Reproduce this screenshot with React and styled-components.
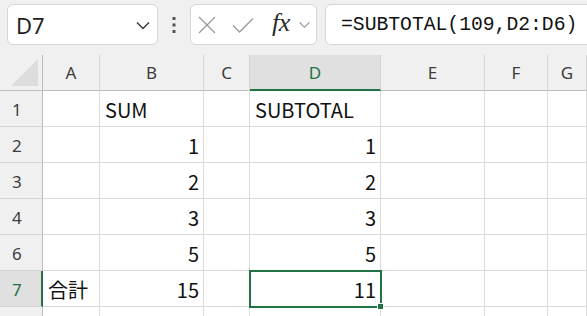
import React from "react";
import styled, { createGlobalStyle } from "styled-components";

const GREEN = "#217346";

const Global = createGlobalStyle`
  html, body { margin: 0; padding: 0; background: #fff; overflow: hidden; }
  * { box-sizing: border-box; }
`;

const Page = styled.div`
  width: 587px;
  height: 316px;
  overflow: hidden;
  font-family: "Noto Sans CJK JP", "Noto Sans", sans-serif;
  background: #fff;
`;

const FormulaBar = styled.div`
  display: flex;
  align-items: flex-start;
  height: 55px;
  padding: 4px 0 0 7px;
  background: #f0f0f0;
  overflow: hidden;
`;

const Box = styled.div`
  height: 41px;
  background: #fff;
  border: 1px solid #d6d6d6;
  border-radius: 6px;
  display: flex;
  align-items: center;
`;

const NameBox = styled(Box)`
  width: 151px;
  padding: 0 6px 0 8px;
  justify-content: space-between;
  font-size: 22px;
  color: #1f1f1f;
  font-family: "Noto Sans", sans-serif;
`;

const DotsWrap = styled.div`
  width: 32px;
  height: 41px;
  display: flex;
  align-items: center;
  justify-content: center;
`;

const FxButtons = styled(Box)`
  width: 127px;
  padding: 0 0 0 6px;
`;

const FxLabel = styled.span`
  font-family: "Liberation Serif", serif;
  font-style: italic;
  font-size: 26px;
  color: #2b2b2b;
  margin: 0 8px 4px 17px;
  letter-spacing: -0.5px;
`;

const FormulaInput = styled(Box)`
  flex: 1 0 auto;
  margin-left: 8px;
  margin-right: -20px;
  padding-left: 15px;
  font-family: "Liberation Mono", monospace;
  font-size: 19.7px;
  color: #111;
`;

const Grid = styled.div`
  display: grid;
  grid-template-columns: 43px 57px 104px 46px 131px 104px 63px 1fr;
  grid-auto-rows: 36px;
`;

const Corner = styled.div`
  background: #f0f0f0;
  border-right: 1px solid #bdbdbd;
  border-bottom: 1px solid #bdbdbd;
  position: relative;
`;

const ColHead = styled.div`
  background: ${(p) => (p.$active ? "#e0e0e0" : "#f0f0f0")};
  border-right: 1px solid #d4d4d4;
  border-bottom: ${(p) => (p.$active ? `2px solid ${GREEN}` : "1px solid #bdbdbd")};
  display: flex;
  align-items: center;
  justify-content: center;
  padding-top: ${(p) => (p.$active ? "1px" : "0")};
  font-family: "Noto Sans", sans-serif;
  font-size: 17px;
  color: ${(p) => (p.$active ? GREEN : "#3c3c3c")};
`;

const RowHead = styled.div`
  background: ${(p) => (p.$active ? "#e0e0e0" : "#f0f0f0")};
  border-right: ${(p) => (p.$active ? `2px solid ${GREEN}` : "1px solid #bdbdbd")};
  border-bottom: 1px solid #d4d4d4;
  display: flex;
  align-items: center;
  padding-left: 12px;
  padding-top: 2px;
  font-family: "Noto Sans", sans-serif;
  font-size: 17px;
  color: ${(p) => (p.$active ? GREEN : "#3c3c3c")};
`;

const Cell = styled.div`
  position: relative;
  border-right: 1px solid #dadada;
  border-bottom: 1px solid #dadada;
  display: flex;
  align-items: center;
  justify-content: ${(p) => (p.$num ? "flex-end" : "flex-start")};
  padding: 2px 4px 0 5px;
  font-size: 20px;
  color: #111;
  z-index: ${(p) => (p.$selected ? 2 : 0)};
`;

const SelectFrame = styled.div`
  position: absolute;
  left: -1px;
  top: -1px;
  right: -2px;
  bottom: -2px;
  border: 2px solid ${GREEN};
  pointer-events: none;
`;

const FillHandle = styled.div`
  position: absolute;
  right: -4px;
  bottom: -4px;
  width: 7px;
  height: 7px;
  background: ${GREEN};
  border: 1px solid #fff;
`;

const Chevron = ({ size = 16, color = "#444", w = 1.6 }) => (
  <svg width={size} height={size} viewBox="0 0 16 16">
    <path d="M2 5.5 L8 11.5 L14 5.5" fill="none" stroke={color} strokeWidth={w} />
  </svg>
);

const Dots = () => (
  <svg width="6" height="18" viewBox="0 0 6 18">
    <rect x="1.5" y="1" width="3" height="3" fill="#555" />
    <rect x="1.5" y="7.5" width="3" height="3" fill="#555" />
    <rect x="1.5" y="14" width="3" height="3" fill="#555" />
  </svg>
);

const XIcon = () => (
  <svg width="20" height="20" viewBox="0 0 20 20">
    <path d="M2 2 L18 18 M18 2 L2 18" stroke="#9a9a9a" strokeWidth="1.3" fill="none" />
  </svg>
);

const CheckIcon = () => (
  <svg width="24" height="20" viewBox="0 0 24 20" style={{ marginLeft: 14 }}>
    <path d="M2 10.5 L8.5 17 L22 3.5" stroke="#9a9a9a" strokeWidth="1.3" fill="none" />
  </svg>
);

const cols = ["A", "B", "C", "D", "E", "F", "G"];
const rows = [
  { n: "1", cells: ["", "SUM", "", "SUBTOTAL", "", "", ""] },
  { n: "2", cells: ["", "1", "", "1", "", "", ""] },
  { n: "3", cells: ["", "2", "", "2", "", "", ""] },
  { n: "4", cells: ["", "3", "", "3", "", "", ""] },
  { n: "6", cells: ["", "5", "", "5", "", "", ""] },
  { n: "7", cells: ["合計", "15", "", "11", "", "", ""], active: true },
  { n: "", cells: ["", "", "", "", "", "", ""] },
];

const isNum = (v) => /^\d+$/.test(v);

export default function App() {
  return (
    <Page>
      <Global />
      <FormulaBar>
        <NameBox>
          <span>D7</span>
          <Chevron size={16} color="#3a3a3a" w={1.5} />
        </NameBox>
        <DotsWrap>
          <Dots />
        </DotsWrap>
        <FxButtons>
          <XIcon />
          <CheckIcon />
          <FxLabel>fx</FxLabel>
          <Chevron size={13} color="#8a8a8a" w={1.3} />
        </FxButtons>
        <FormulaInput>=SUBTOTAL(109,D2:D6)</FormulaInput>
      </FormulaBar>
      <Grid>
        <Corner>
          <svg width="30" height="30" viewBox="0 0 30 30" style={{ position: "absolute", right: 2, bottom: 2 }}>
            <path d="M28 1 L28 28 L1 28 Z" fill="#dcdcdc" />
          </svg>
        </Corner>
        {cols.map((c) => (
          <ColHead key={c} $active={c === "D"}>
            {c}
          </ColHead>
        ))}
        {rows.map((r, ri) => (
          <React.Fragment key={ri}>
            <RowHead $active={r.active}>{r.n}</RowHead>
            {r.cells.map((v, i) => {
              const selected = r.active && cols[i] === "D";
              return (
                <Cell key={i} $num={isNum(v)} $selected={selected}>
                  {v}
                  {selected && (
                    <SelectFrame>
                      <FillHandle />
                    </SelectFrame>
                  )}
                </Cell>
              );
            })}
          </React.Fragment>
        ))}
      </Grid>
    </Page>
  );
}
